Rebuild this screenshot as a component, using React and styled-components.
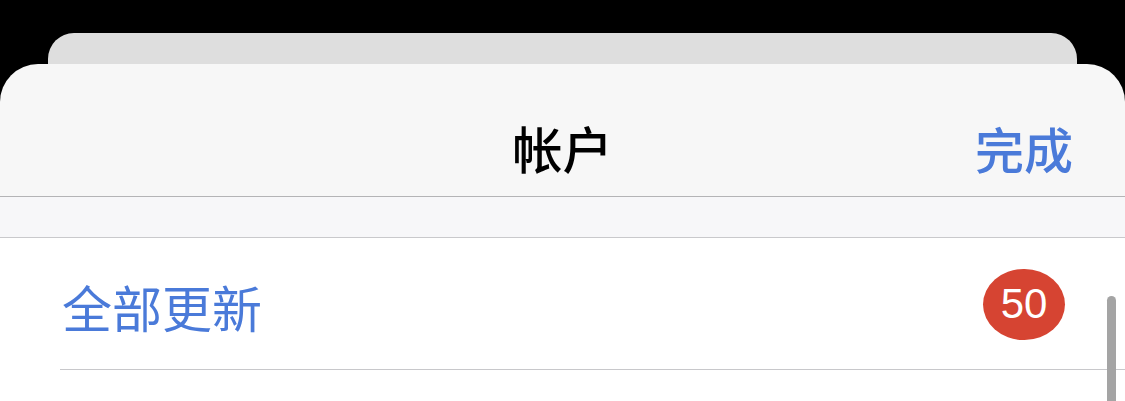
import React from 'react';
import styled, { createGlobalStyle } from 'styled-components';

const GlobalStyle = createGlobalStyle`
  html, body {
    margin: 0;
    padding: 0;
    background: #000;
  }
  body {
    font-family: "Noto Sans CJK SC", "Noto Sans", sans-serif;
  }
`;

const Screen = styled.div`
  position: relative;
  width: 1125px;
  height: 401px;
  overflow: hidden;
  background: #000;
  padding-top: 33px;
  box-sizing: border-box;
  display: flex;
  flex-direction: column;
`;

const BackSheet = styled.div`
  height: 31px;
  margin: 0 48px 0 48px;
  background: #dedede;
  border-radius: 26px 26px 0 0;
  flex-shrink: 0;
`;

const Sheet = styled.div`
  flex: 1;
  background: #f7f7f7;
  border-radius: 38px 38px 0 0;
  display: flex;
  flex-direction: column;
`;

const NavBar = styled.div`
  height: 133px;
  box-sizing: border-box;
  display: grid;
  grid-template-columns: 1fr auto 1fr;
  align-items: center;
  padding: 34px 52px 0 52px;
  border-bottom: 1px solid #b4b4b6;
  flex-shrink: 0;
`;

const Title = styled.div`
  grid-column: 2;
  font-size: 50px;
  font-weight: 500;
  color: #000;
  line-height: 1;
`;

const DoneButton = styled.div`
  justify-self: end;
  font-size: 49px;
  font-weight: 500;
  color: #4a7ad9;
  line-height: 1;
`;

const SectionGap = styled.div`
  height: 40px;
  background: #f7f7f9;
  border-bottom: 1px solid #c9c9cc;
  flex-shrink: 0;
`;

const List = styled.div`
  flex: 1;
  background: #fff;
`;

const Row = styled.div`
  height: 132px;
  display: flex;
  align-items: center;
  justify-content: space-between;
  padding: 0 60px 0 62px;
  position: relative;
  &::after {
    content: '';
    position: absolute;
    left: 60px;
    right: 0;
    bottom: 0;
    height: 1px;
    background: #c8c8cb;
  }
`;

const RowLabel = styled.div`
  font-size: 50px;
  color: #4a7ad9;
  line-height: 1;
  padding-top: 4px;
`;

const Badge = styled.div`
  width: 82px;
  height: 71px;
  border-radius: 41px / 36px;
  background: #d64432;
  color: #fff;
  font-family: "Liberation Sans", "Noto Sans", sans-serif;
  font-size: 42px;
  display: flex;
  align-items: center;
  justify-content: center;
`;

const ScrollThumb = styled.div`
  position: absolute;
  left: 1107px;
  top: 296px;
  width: 9px;
  height: 140px;
  border-radius: 5px;
  background: #a4a4a4;
`;

export default function App() {
  return (
    <>
      <GlobalStyle />
      <Screen>
        <BackSheet />
        <Sheet>
          <NavBar>
            <Title>帐户</Title>
            <DoneButton>完成</DoneButton>
          </NavBar>
          <SectionGap />
          <List>
            <Row>
              <RowLabel>全部更新</RowLabel>
              <Badge>50</Badge>
            </Row>
          </List>
        </Sheet>
        <ScrollThumb />
      </Screen>
    </>
  );
}
